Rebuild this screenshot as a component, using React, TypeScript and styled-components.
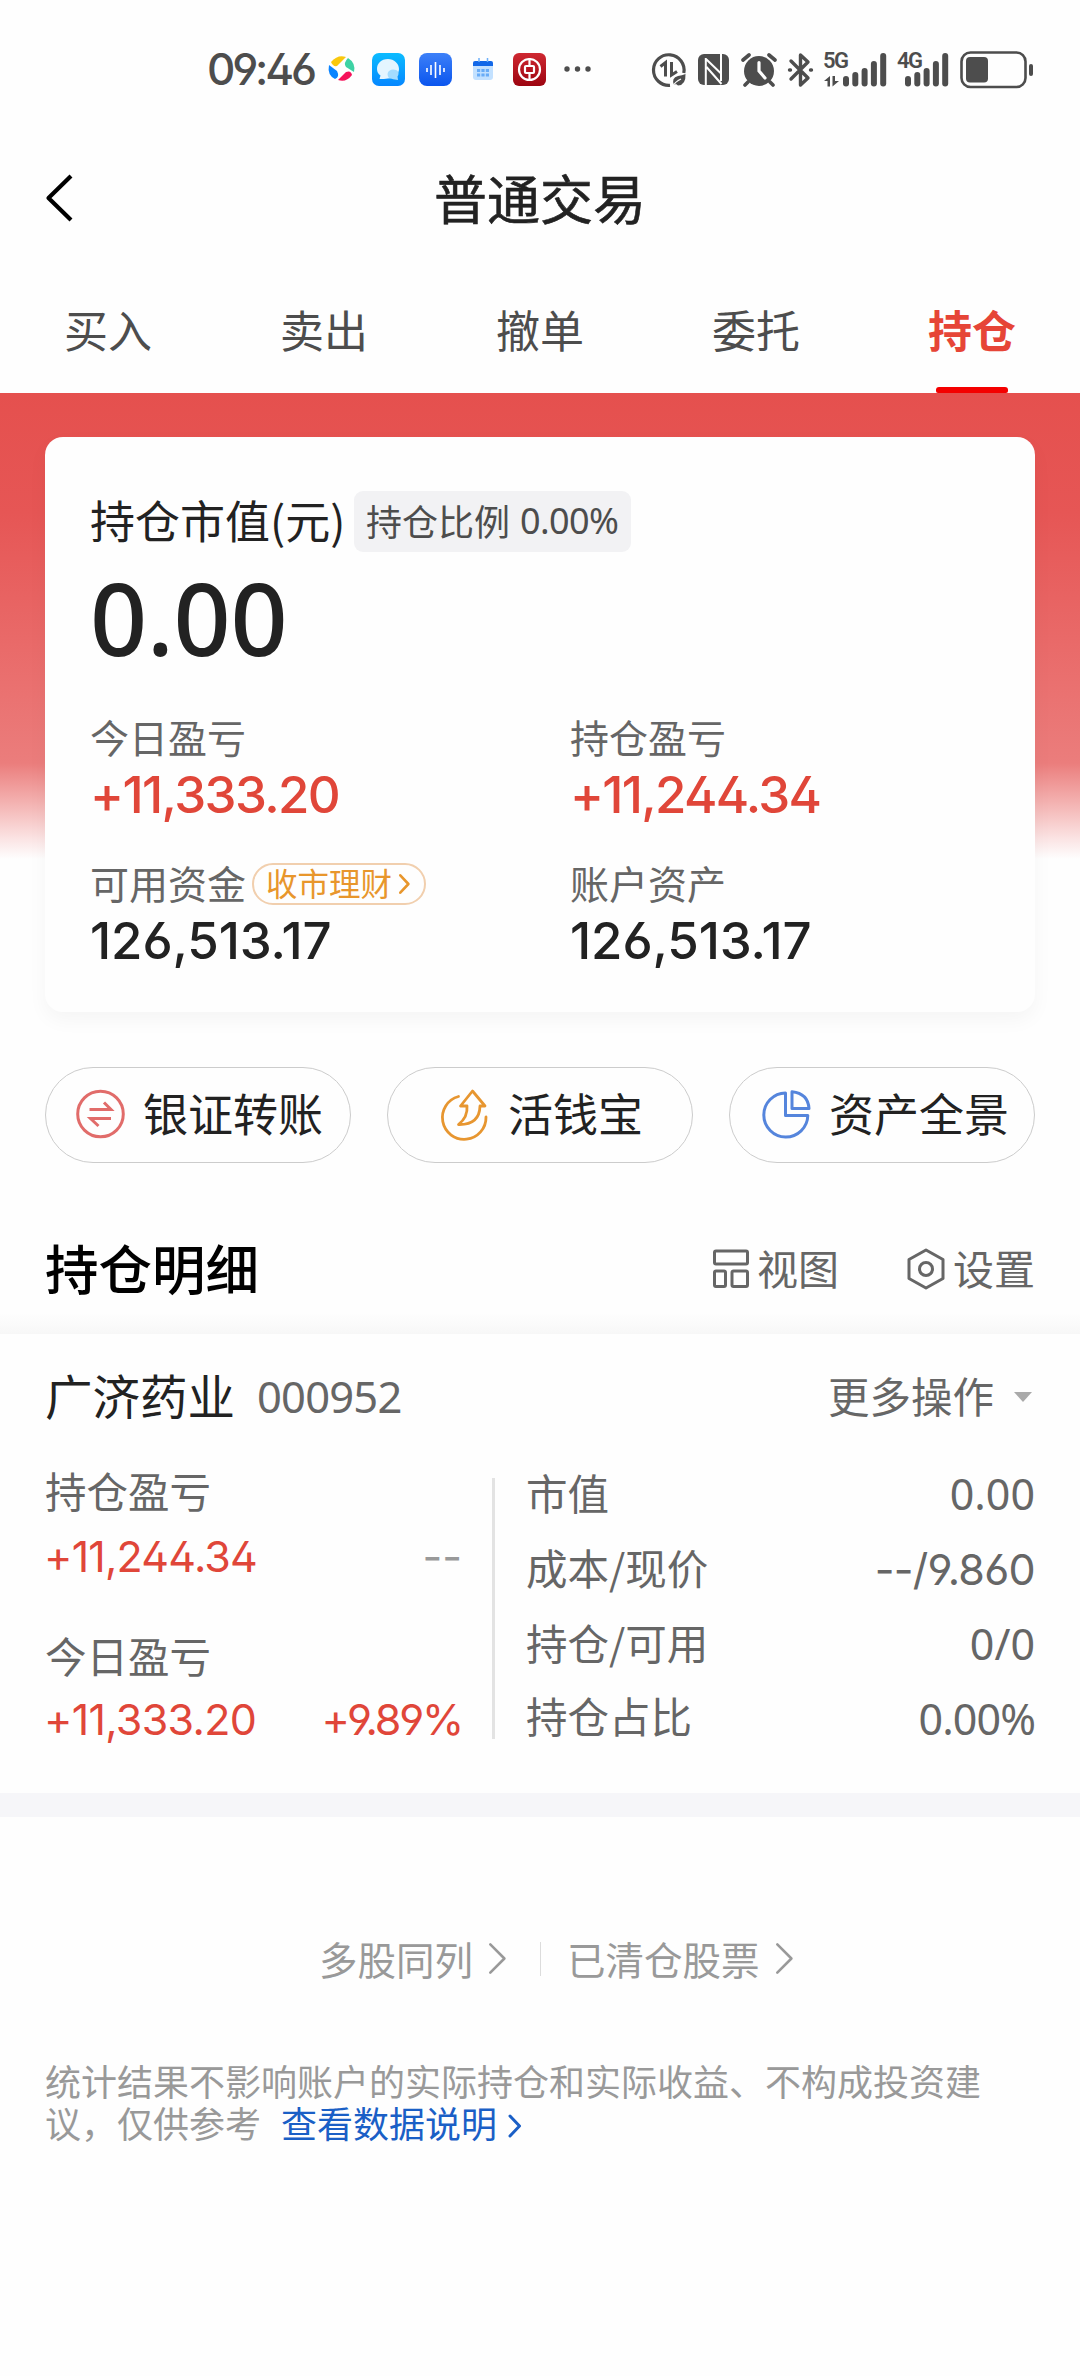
import React from "react";
import styled, { createGlobalStyle, css } from "styled-components";

const Global = createGlobalStyle`
  * { box-sizing: border-box; }
  body { margin: 0; background: #fefefe; }
`;

const ink = "#222222";
const mid = "#666666";
const dark = "#4d4d4d";
const faint = "#999999";
const red = "#e04639";
const amber = "#e8962c";

/* Han text; the negative margin optically centres the glyph body on its row */
const Han = styled.span<{ $s: number; $c?: string; $w?: number }>`
  font-family: "Noto Sans CJK SC", sans-serif;
  font-size: ${(p) => p.$s}px;
  line-height: 1.3;
  margin-top: -0.07em;
  font-weight: ${(p) => p.$w ?? 400};
  color: ${(p) => p.$c ?? mid};
  white-space: pre;
`;

/* Figures, with open 4, 6 and 9 */
const Num = styled.span<{ $s: number; $c?: string; $w?: number; $ls?: number; $ml?: number }>`
  font-family: "Inter", "Noto Sans CJK SC", sans-serif;
  font-feature-settings: "cv02", "cv03", "cv04";
  font-size: ${(p) => p.$s}px;
  line-height: 1.2;
  margin-left: ${(p) => p.$ml ?? 0}px;
  font-weight: ${(p) => p.$w ?? 400};
  color: ${(p) => p.$c ?? mid};
  letter-spacing: ${(p) => p.$ls ?? 0}px;
  white-space: pre;
`;

/* Narrower figures for runs of zeros */
const Zeros = styled(Num)`
  font-family: "Noto Sans", "Noto Sans CJK SC", sans-serif;
  font-feature-settings: normal;
  margin-top: -0.04em;
`;

const Page = styled.div`
  width: 1080px;
  height: 2376px;
  background: #fefefe;
  display: flex;
  flex-direction: column;
  overflow: hidden;
`;

const StatusBar = styled.div`
  height: 139px;
  padding: 0 46px 0 206px;
  display: flex;
  align-items: center;
  justify-content: space-between;
`;
const StatusGroup = styled.div`
  display: flex;
  align-items: center;
`;
const Glyph = styled.svg<{ $ml?: number }>`
  display: block;
  flex: none;
  margin-left: ${(p) => p.$ml ?? 0}px;
  overflow: visible;
`;
const Clock = styled.div`
  width: 122px;
  display: flex;
`;
const Network = styled.div<{ $ml: number; $w: number }>`
  position: relative;
  width: ${(p) => p.$w}px;
  height: 34px;
  margin-left: ${(p) => p.$ml}px;
`;
const NetworkTag = styled.span`
  position: absolute;
  left: -1px;
  top: -3px;
  font: 600 22px/22px "Roboto", sans-serif;
  letter-spacing: -1.5px;
  color: ${dark};
`;
const ArrowMark = styled.svg`
  position: absolute;
  left: 0;
  bottom: 0;
`;

const Header = styled.header`
  height: 120px;
  padding: 0 45px;
  display: grid;
  grid-template-columns: 120px 1fr 120px;
  align-items: center;
  justify-items: start;
`;
const Title = styled.div`
  justify-self: center;
  display: flex;
  -webkit-text-stroke: 0.6px ${ink};
`;

const Tabs = styled.nav`
  height: 134px;
  display: grid;
  grid-template-columns: repeat(5, 1fr);
`;
const Tab = styled.div`
  padding-top: 45px;
  display: flex;
  flex-direction: column;
  align-items: center;
  justify-content: space-between;
`;
const TabLine = styled.i`
  width: 72px;
  height: 6px;
  border-radius: 3px 3px 2px 2px;
  background: #f40000;
`;

const Hero = styled.section`
  padding: 44px 45px 0;
  background: linear-gradient(
      180deg,
      #e5504e 0,
      #e65655 120px,
      #ea706f 290px,
      #eb7d7c 370px,
      #f4b5b4 412px,
      #fbe4e4 446px,
      #fefefe 466px
    )
    no-repeat;
`;
const Card = styled.div`
  height: 575px;
  padding: 54px 45px 0;
  border-radius: 18px;
  background: #fefefe;
  box-shadow: 0 8px 20px rgba(0, 0, 0, 0.04);
`;
const CardTop = styled.div`
  height: 61px;
  display: flex;
  align-items: center;
`;
const CardLabel = styled.div`
  width: 264px;
  display: flex;
`;
const Badge = styled.div`
  width: 277px;
  height: 61px;
  padding-left: 12px;
  border-radius: 9px;
  background: #f2f2f4;
  display: flex;
  align-items: center;
`;
const Total = styled.div`
  height: 134px;
  display: flex;
  align-items: center;
`;
const Metrics = styled.div`
  margin-top: 28px;
  display: grid;
  grid-template-columns: 480px 1fr;
  row-gap: 35px;
`;
const Metric = styled.div``;
const MetricLabel = styled.div`
  height: 48px;
  display: flex;
  align-items: center;
`;
const MetricValue = styled.div`
  height: 63px;
  padding-top: 3px;
  display: flex;
  align-items: center;
`;
const Promo = styled.div`
  width: 174px;
  height: 42px;
  margin-left: 6px;
  padding: 0 13px 0 12px;
  border: 2px solid #f1cfae;
  border-radius: 21px;
  display: flex;
  align-items: center;
  justify-content: space-between;
`;

const Actions = styled.div`
  margin-top: 55px;
  padding: 0 45px;
  display: grid;
  grid-template-columns: repeat(3, 1fr);
  gap: 36px;
`;
const Action = styled.div<{ $pl: number; $gap: number }>`
  height: 96px;
  border: 1px solid #cccccc;
  border-radius: 48px;
  padding-left: ${(p) => p.$pl}px;
  display: flex;
  align-items: center;
  gap: ${(p) => p.$gap}px;
`;

const SectionHead = styled.div`
  height: 171px;
  padding: 41px 45px 0;
  display: flex;
  align-items: center;
  justify-content: space-between;
  background: linear-gradient(180deg, rgba(247, 247, 247, 0), #f7f7f7) no-repeat 0 100% / 100% 21px;
`;
const Tools = styled.div`
  display: flex;
  gap: 68px;
`;
const Tool = styled.div`
  display: flex;
  align-items: center;
  gap: 8px;
`;

const StockHead = styled.div`
  height: 123px;
  padding: 3px 45px 0;
  display: flex;
  align-items: center;
`;
const More = styled.div`
  margin-left: auto;
  padding-right: 3px;
  display: flex;
  align-items: center;
  gap: 20px;
`;
const StockBody = styled.div`
  height: 336px;
  padding: 0 45px;
  display: flex;
`;
const ProfitCol = styled.div`
  width: 447px;
  padding: 3px 30px 0 0;
`;
const line = css`
  display: flex;
  align-items: center;
  justify-content: space-between;
`;
const ProfitRow = styled.div<{ $h: number; $mt?: number }>`
  ${line}
  height: ${(p) => p.$h}px;
  margin-top: ${(p) => p.$mt ?? 0}px;
`;
const Rule = styled.div`
  width: 3px;
  height: 261px;
  margin-top: 21px;
  background: #e3e3e3;
`;
const DetailCol = styled.div`
  flex: 1;
  padding-left: 31px;
`;
const DetailRow = styled.div`
  ${line}
  height: 75px;
  &:last-child > :first-child {
    margin-bottom: 5px;
  }
`;
const Band = styled.div`
  height: 24px;
  background: #f6f6f9;
`;

const Links = styled.div`
  margin-top: 109px;
  height: 66px;
  padding-left: 319px;
  display: flex;
  align-items: center;
`;
const LinkItem = styled.div`
  display: flex;
  align-items: center;
  gap: 16px;
`;
const LinkRule = styled.i`
  width: 1px;
  height: 34px;
  margin: 0 26px 0 33px;
  background: #dcdcdc;
`;
const Note = styled.p`
  margin: 67px 0 0 45px;
  width: 950px;
  font-family: "Noto Sans CJK SC", sans-serif;
  font-size: 36px;
  line-height: 42px;
  color: ${faint};
`;
const NoteLink = styled.a`
  margin-left: 20px;
  color: #1a5fc6;
`;
const NoteArrow = styled.svg`
  margin-left: 11px;
`;

const Bars = ({ x }: { x: number }) => (
  <Glyph width="1" height="34" viewBox="0 0 1 34">
    {[23, 19, 15, 8, 0].map((top, i) => (
      <rect key={i} x={x + i * 9.3} y={top} width="6" height={33.5 - top} rx="3" fill={dark} />
    ))}
  </Glyph>
);

const NetArrows = () => (
  <ArrowMark width="15" height="11" viewBox="0 0 15 11">
    <path d="M0 5L6 0V10.500H3.500V5ZM8.500 10.500V0H11V5H15Z" fill={dark} />
  </ArrowMark>
);

const Chevron = ({ w, h, c, s }: { w: number; h: number; c: string; s: number }) => (
  <Glyph width={w} height={h} viewBox={`0 0 ${w} ${h}`}>
    <path
      d={`M${s / 2} ${s / 2}L${w - s} ${h / 2}L${s / 2} ${h - s / 2}`}
      fill="none"
      stroke={c}
      strokeWidth={s}
      strokeLinecap="round"
      strokeLinejoin="round"
    />
  </Glyph>
);

const details = [
  { label: "市值", value: "0.00", Font: Zeros, ls: 0 },
  { label: "成本/现价", value: "--/9.860", Font: Num, ls: -0.7 },
  { label: "持仓/可用", value: "0/0", Font: Zeros, ls: 0 },
  { label: "持仓占比", value: "0.00%", Font: Zeros, ls: -0.9 },
];

export default function App() {
  return (
    <Page>
      <Global />
      <StatusBar>
        <StatusGroup>
          <Clock><Num $s={44} $c={dark} $w={500} $ls={-3.2} $ml={1}>09:46</Num></Clock>
          <Glyph width="28" height="28" viewBox="0 0 28 28">
            <path d="M3 7Q10 -1 18 2L9 11Q5 12 3 7Z" fill="#f9c80e" />
            <path d="M20 3Q28 8 26 17L18 12Q15 8 20 3Z" fill="#3dd2a4" />
            <path d="M24 20Q18 28 10 25L18 17Q23 15 24 20Z" fill="#f5125a" />
            <path d="M1 10Q-1 20 7 24Q12 22 9 16Z" fill="#0a84ff" />
          </Glyph>
          <Glyph $ml={16} width="33" height="33" viewBox="0 0 33 33">
            <defs>
              <linearGradient id="chat" x1="0" y1="0" x2="0" y2="1"><stop stopColor="#0cbcff" /><stop offset="1" stopColor="#0687ff" /></linearGradient>
              <linearGradient id="voice" x1="0" y1="0" x2="0" y2="1"><stop stopColor="#3d80f8" /><stop offset="1" stopColor="#0a55ee" /></linearGradient>
              <linearGradient id="bank" x1="0" y1="0" x2="0" y2="1"><stop stopColor="#cf2831" /><stop offset="1" stopColor="#9c0410" /></linearGradient>
            </defs>
            <rect width="33" height="33" rx="7" fill="url(#chat)" />
            <path d="M16 6C9 6 5 10.500 5 16Q5 20 8.500 22.500L7.500 26Q12 26 16 25.500C23 25 27 21 27 16C27 10.500 22 6 16 6Z" fill="#e4f5ff" />
            <path d="M21 16.500C16 17 14 21 17 25Q21 26.500 26 27L25.500 23.500C28 20 26 16.500 21 16.500Z" fill="#a4dcff" />
          </Glyph>
          <Glyph $ml={14} width="33" height="33" viewBox="0 0 33 33">
            <rect width="33" height="33" rx="8" fill="url(#voice)" />
            <path d="M8 15V19M12 12V22M16.500 9V25M21 12V22M25 15V19" stroke="#fff" strokeWidth="1.600" />
          </Glyph>
          <Glyph $ml={20} width="22" height="23" viewBox="0 0 22 23">
            <rect x="1" y="4" width="20" height="18" rx="3" fill="#c3e1ff" />
            <path d="M1 8V5Q1 3 3 3H19Q21 3 21 5V8Z" fill="#1268e8" />
            <path d="M7 0V4M15.500 0V4" stroke="#6db0fa" strokeWidth="1.500" />
            <path d="M5 12.500H17M5 17H17" stroke="#68acf7" strokeWidth="3" strokeDasharray="3.200 1.200" />
          </Glyph>
          <Glyph $ml={19} width="33" height="33" viewBox="0 0 33 33">
            <rect width="33" height="33" rx="6" fill="url(#bank)" />
            <circle cx="16.500" cy="16.500" r="10.500" fill="none" stroke="#fff" strokeWidth="2.200" />
            <rect x="12" y="13" width="9" height="7" rx="1" fill="none" stroke="#fff" strokeWidth="2.200" />
            <path d="M16.500 5V13M16.500 20V28" stroke="#fff" strokeWidth="2.200" />
          </Glyph>
          <Glyph $ml={18} width="28" height="6" viewBox="0 0 28 6">
            <g fill={dark}>
              <circle cx="3" cy="3" r="2.700" />
              <circle cx="13.500" cy="3" r="2.700" />
              <circle cx="24" cy="3" r="2.700" />
            </g>
          </Glyph>
        </StatusGroup>
        <StatusGroup>
          <Glyph width="34" height="34" viewBox="0 0 34 34" fill="none" stroke={dark}>
            <path d="M18 32.300A15.300 15.300 0 1 1 31.800 20" strokeWidth="3.200" />
            <path d="M8.500 13.500L13.500 9.500V23.500" strokeWidth="3" />
            <path d="M19.500 9V22L25 18.500" strokeWidth="3" />
            <path d="M22 32Q19 25 26 23Q30 22.500 33.500 21Q34 32 26 32.500L24 31Z" fill={dark} stroke="none" />
            <path d="M20.500 34Q23 28.500 29 26" stroke="#fefefe" strokeWidth="1.300" />
          </Glyph>
          <Glyph $ml={12} width="31" height="31" viewBox="0 0 31 31">
            <rect width="31" height="31" rx="6" fill={dark} />
            <path d="M7.800 4V31M8.500 5.500L22.500 19M8.500 13L23.500 30M23 0V27" stroke="#fefefe" strokeWidth="2" fill="none" />
          </Glyph>
          <Glyph $ml={12} width="36" height="34" viewBox="0 0 36 34">
            <circle cx="18" cy="18" r="15" fill={dark} />
            <path d="M2 7L8 2M34 7L28 2M7 29L4 32M29 29L32 32" stroke={dark} strokeWidth="3.600" strokeLinecap="round" />
            <path d="M18 9.500V18L24 25" stroke="#fefefe" strokeWidth="3.200" fill="none" strokeLinecap="round" />
          </Glyph>
          <Glyph $ml={11} width="25" height="34" viewBox="0 0 25 34" fill="none" stroke={dark} strokeWidth="3.400" strokeLinejoin="round" strokeLinecap="round">
            <path d="M3 8L20 25L12.500 32V2L20 9L3 26" />
            <path d="M1.500 17H2.500M22.500 17H23.500" />
          </Glyph>
          <Network $ml={11} $w={62}>
            <NetworkTag>5G</NetworkTag>
            <Bars x={19} />
            <NetArrows />
          </Network>
          <Network $ml={12} $w={50}>
            <NetworkTag>4G</NetworkTag>
            <Bars x={7} />
          </Network>
          <Glyph $ml={12} width="74" height="38" viewBox="0 0 74 38">
            <rect x="1.500" y="1.500" width="64" height="34.500" rx="9" fill="none" stroke={dark} strokeWidth="2.600" />
            <rect x="6" y="6" width="22" height="25.500" rx="4" fill={dark} />
            <rect x="69" y="13" width="4" height="12" rx="2" fill={dark} />
          </Glyph>
        </StatusGroup>
      </StatusBar>

      <Header>
        <Glyph width="30" height="50" viewBox="0 0 30 50">
          <path d="M26 2L3.500 24L26 46" fill="none" stroke="#000" strokeWidth="4.200" strokeLinejoin="round" />
        </Glyph>
        <Title><Han $s={53} $c={ink}>普通交易</Han></Title>
      </Header>

      <Tabs>
        {["买入", "卖出", "撤单", "委托"].map((t) => (
          <Tab key={t}><Han $s={44} $c={dark}>{t}</Han></Tab>
        ))}
        <Tab>
          <Han $s={44} $c="#e64537" $w={700}>持仓</Han>
          <TabLine />
        </Tab>
      </Tabs>

      <Hero>
        <Card>
          <CardTop>
            <CardLabel><Han $s={45} $c={ink}>持仓市值(元)</Han></CardLabel>
            <Badge>
              <Han $s={36} $c={dark}>持仓比例</Han>
              <Zeros $s={36} $c={dark} $ls={-0.6} $ml={10}>0.00%</Zeros>
            </Badge>
          </CardTop>
          <Total><Zeros $s={100} $c={ink} $w={500} $ls={-0.4}>0.00</Zeros></Total>
          <Metrics>
            <Metric>
              <MetricLabel><Han $s={39}>今日盈亏</Han></MetricLabel>
              <MetricValue><Num $s={51} $c={red} $w={500} $ls={-1.6}>+11,333.20</Num></MetricValue>
            </Metric>
            <Metric>
              <MetricLabel><Han $s={39}>持仓盈亏</Han></MetricLabel>
              <MetricValue><Num $s={51} $c={red} $w={500} $ls={-1.7}>+11,244.34</Num></MetricValue>
            </Metric>
            <Metric>
              <MetricLabel>
                <Han $s={39}>可用资金</Han>
                <Promo>
                  <Han $s={31.5} $c={amber}>收市理财</Han>
                  <Chevron w={12} h={20} c={amber} s={2.6} />
                </Promo>
              </MetricLabel>
              <MetricValue><Num $s={51} $c={ink} $w={500} $ls={-0.1}>126,513.17</Num></MetricValue>
            </Metric>
            <Metric>
              <MetricLabel><Han $s={39}>账户资产</Han></MetricLabel>
              <MetricValue><Num $s={51} $c={ink} $w={500} $ls={-0.1}>126,513.17</Num></MetricValue>
            </Metric>
          </Metrics>
        </Card>
      </Hero>

      <Actions>
        <Action $pl={30} $gap={17}>
          <Glyph width="50" height="50" viewBox="0 0 50 50" fill="none" stroke="#e16c6a" strokeWidth="3">
            <circle cx="24.500" cy="24" r="22.800" />
            <path d="M13.500 19.500H35L28 12.500M35 28.500H14.500L22.500 36" />
          </Glyph>
          <Han $s={45} $c={ink}>银证转账</Han>
        </Action>
        <Action $pl={52} $gap={18}>
          <Glyph width="50" height="52" viewBox="0 0 50 52" fill="none" stroke="#e79630" strokeWidth="2.800" strokeLinecap="round" strokeLinejoin="round">
            <path d="M18.500 7.500A21.800 21.800 0 1 0 46 28" />
            <path d="M32.500 2L45 17H40Q39.500 36 18.500 35.500Q28 28 27 17H20.500Z" />
          </Glyph>
          <Han $s={45} $c={ink}>活钱宝</Han>
        </Action>
        <Action $pl={32} $gap={17}>
          <Glyph width="50" height="50" viewBox="0 0 50 50" fill="none" stroke="#5585dc" strokeWidth="3" strokeLinejoin="round">
            <path d="M23.500 3A22 22 0 1 0 45.800 25.500H23.500Z" />
            <path d="M30 1.800V18.500H47Q46 3.500 30 1.800Z" />
          </Glyph>
          <Han $s={45} $c={ink}>资产全景</Han>
        </Action>
      </Actions>

      <SectionHead>
        <Han $s={53.5} $c="#000" $w={500}>持仓明细</Han>
        <Tools>
          <Tool>
            <Glyph width="36" height="40" viewBox="0 0 36 40" fill="none" stroke={mid} strokeWidth="3">
              <rect x="1.500" y="2" width="33" height="13" rx="1.500" />
              <rect x="1.500" y="22" width="11" height="15.500" rx="1.500" />
              <rect x="19" y="22" width="15.500" height="15.500" rx="1.500" />
            </Glyph>
            <Han $s={41}>视图</Han>
          </Tool>
          <Tool>
            <Glyph width="38" height="42" viewBox="0 0 38 42" fill="none" stroke={mid} strokeWidth="3" strokeLinejoin="round">
              <path d="M19 2L36 11.500V30.500L19 40L2 30.500V11.500Z" />
              <circle cx="19" cy="21" r="6.500" />
            </Glyph>
            <Han $s={41}>设置</Han>
          </Tool>
        </Tools>
      </SectionHead>

      <StockHead>
        <Han $s={47.5} $c={ink}>广济药业</Han>
        <Zeros $s={43.5} $ls={-0.8} $ml={22}>000952</Zeros>
        <More>
          <Han $s={41.5}>更多操作</Han>
          <Glyph width="18" height="10" viewBox="0 0 18 10"><path d="M0 0H18L9 10Z" fill="#aaa" /></Glyph>
        </More>
      </StockHead>

      <StockBody>
        <ProfitCol>
          <ProfitRow $h={64}><Han $s={41.5}>持仓盈亏</Han></ProfitRow>
          <ProfitRow $h={66}>
            <Num $s={43} $c={red} $ls={-0.8} $ml={-1}>+11,244.34</Num>
            <Num $s={43} $c={faint}>--</Num>
          </ProfitRow>
          <ProfitRow $h={64} $mt={35}><Han $s={41.5}>今日盈亏</Han></ProfitRow>
          <ProfitRow $h={62}>
            <Num $s={43} $c={red} $ls={-0.7} $ml={-1}>+11,333.20</Num>
            <Num $s={43} $c={red} $ls={-2.2}>+9.89%</Num>
          </ProfitRow>
        </ProfitCol>
        <Rule />
        <DetailCol>
          {details.map(({ label, value, Font, ls }) => (
            <DetailRow key={label}>
              <Han $s={41.5}>{label}</Han>
              <Font $s={43} $ls={ls}>{value}</Font>
            </DetailRow>
          ))}
        </DetailCol>
      </StockBody>
      <Band />

      <Links>
        <LinkItem><Han $s={38.5} $c={faint}>多股同列</Han><Chevron w={18} h={31} c={faint} s={2.6} /></LinkItem>
        <LinkRule />
        <LinkItem><Han $s={38.5} $c={faint}>已清仓股票</Han><Chevron w={18} h={31} c={faint} s={2.6} /></LinkItem>
      </Links>

      <Note>
        统计结果不影响账户的实际持仓和实际收益、不构成投资建议，仅供参考
        <NoteLink>
          查看数据说明
          <NoteArrow width="14" height="24" viewBox="0 0 14 24">
            <path d="M2 2L11.500 12L2 22" fill="none" stroke="#1a5fc6" strokeWidth="3" strokeLinecap="round" strokeLinejoin="round" />
          </NoteArrow>
        </NoteLink>
      </Note>
    </Page>
  );
}
